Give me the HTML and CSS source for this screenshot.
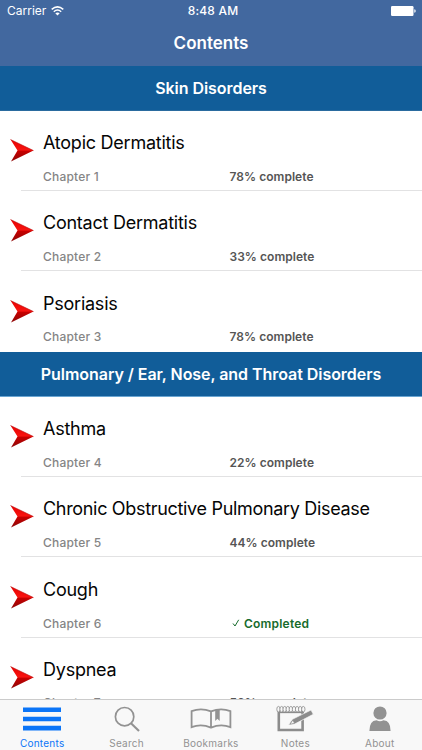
FILE: index.html
```html
<!DOCTYPE html>
<html lang="en">
<head>
<meta charset="utf-8">
<title>Contents</title>
<link rel="stylesheet" href="styles.css">
</head>
<body>
<svg width="0" height="0" class="defs">
  <defs>
    <linearGradient id="red" x1="0" y1="0" x2="0" y2="1"><stop offset="0" stop-color="#e80000"/><stop offset=".48" stop-color="#f81410"/><stop offset=".53" stop-color="#c80000"/><stop offset="1" stop-color="#8c0808"/></linearGradient>
    <symbol id="arrow" viewBox="0 0 24 23"><path d="M.5 .5 23.5 11.6 1 22.5 7.5 11.6Z" fill="url(#red)"/><path d="M.5 .5 23.5 11.6" stroke="#b51212" stroke-width=".6"/></symbol>
  </defs>
</svg>
<div class="screen">
  <header class="top">
    <div class="status">
      <div class="carrier"><span>Carrier</span>
        <svg width="13" height="10" viewBox="0 0 13 10" fill="none" stroke="#fff" stroke-width="1.5"><path d="M.7 3.4Q6.5-1.7 12.3 3.4M2.8 5.7Q6.5 2.4 10.2 5.7"/><path d="M4.3 7.3Q6.5 5.5 8.7 7.3L6.5 9.6Z" fill="#fff" stroke="none"/></svg>
      </div>
      <div class="clock">8:48 AM</div>
      <svg class="battery" width="25" height="10" viewBox="0 0 25 10" fill="#fff"><rect width="22.5" height="10" rx="1.2"/><path d="M23.3 3.3Q24.7 3.5 24.7 5T23.3 6.7Z"/></svg>
    </div>
    <h1>Contents</h1>
  </header>
  <main class="list">
    <h2>Skin Disorders</h2>
    <div class="row"><svg class="arrow"><use href="#arrow"/></svg><div class="cell"><div class="title">Atopic Dermatitis</div><div class="meta"><span>Chapter 1</span><b>78% complete</b></div></div></div>
    <div class="row"><svg class="arrow"><use href="#arrow"/></svg><div class="cell"><div class="title">Contact Dermatitis</div><div class="meta"><span>Chapter 2</span><b>33% complete</b></div></div></div>
    <div class="row last"><svg class="arrow"><use href="#arrow"/></svg><div class="cell"><div class="title">Psoriasis</div><div class="meta"><span>Chapter 3</span><b>78% complete</b></div></div></div>
    <h2 class="second">Pulmonary / Ear, Nose, and Throat Disorders</h2>
    <div class="row"><svg class="arrow"><use href="#arrow"/></svg><div class="cell"><div class="title">Asthma</div><div class="meta"><span>Chapter 4</span><b>22% complete</b></div></div></div>
    <div class="row"><svg class="arrow"><use href="#arrow"/></svg><div class="cell"><div class="title long">Chronic Obstructive Pulmonary Disease</div><div class="meta"><span>Chapter 5</span><b>44% complete</b></div></div></div>
    <div class="row"><svg class="arrow"><use href="#arrow"/></svg><div class="cell"><div class="title">Cough</div><div class="meta"><span>Chapter 6</span><b class="done"><svg width="8" height="8" viewBox="0 0 8 8" fill="none" stroke="#176b2c"><path d="M1 4.5 3 7 6.7.8"/></svg>Completed</b></div></div></div>
    <div class="row partial"><svg class="arrow"><use href="#arrow"/></svg><div class="cell"><div class="title">Dyspnea</div><div class="meta"><span>Chapter 7</span><b>56% complete</b></div></div></div>
  </main>
  <nav class="tabs">
    <div class="tab active"><svg width="38" height="28" viewBox="0 0 38 28"><path d="M0 3.5h38v4.6H0zM0 12.7h38v4.6H0zM0 21.8h38v4.6H0z" fill="#0b75f7"/></svg><span>Contents</span></div>
    <div class="tab"><svg width="28" height="28" viewBox="0 0 28 28" fill="none" stroke="#929292"><circle cx="11.6" cy="12.7" r="9.2" stroke-width="1.7"/><path d="M18 19.2 26 27" stroke-width="2.1"/></svg><span>Search</span></div>
    <div class="tab"><svg width="42" height="28" viewBox="0 0 42 28" fill="none" stroke="#929292" stroke-width="1.8"><path d="M21 7.4Q11 3.4 1.6 7.2V23.2Q11 19.4 21 23.6Q31 19.4 40.4 23.2V7.2Q31 3.4 21 7.4ZM21 7.4V23.6"/><path d="M25.2 6 29.7 5.1V17L27.4 14.8 25.2 17Z" fill="#929292" stroke="none"/></svg><span>Bookmarks</span></div>
    <div class="tab"><svg width="38" height="28" viewBox="0 0 38 28" fill="none" stroke="#8c8c8c"><path d="M2.8 6V26H26.6V7" stroke-width="2.6"/><path d="M2 8.4H27.6" stroke-width="1.5"/><g stroke-width=".8" fill="#f8f8f8"><ellipse cx="2.5" cy="5.2" rx="1.7" ry="2.8"/><ellipse cx="5.6" cy="5.2" rx="1.7" ry="2.8"/><ellipse cx="8.7" cy="5.2" rx="1.7" ry="2.8"/><ellipse cx="11.8" cy="5.2" rx="1.7" ry="2.8"/><ellipse cx="14.9" cy="5.2" rx="1.7" ry="2.8"/><ellipse cx="18" cy="5.2" rx="1.7" ry="2.8"/><ellipse cx="21.1" cy="5.2" rx="1.7" ry="2.8"/><ellipse cx="24.2" cy="5.2" rx="1.7" ry="2.8"/><ellipse cx="27.3" cy="5.2" rx="1.7" ry="2.8"/></g><path d="M12.5 21.1 16.3 15.3 35 6 37.3 10.3 18.7 20Z" fill="#8c8c8c" stroke="#f8f8f8" stroke-width=".7"/><path d="M14 20.2 16.8 16.2 18.5 19.2Z" fill="#f8f8f8" stroke="#8c8c8c" stroke-width=".6"/></svg><span>Notes</span></div>
    <div class="tab"><svg width="22" height="28" viewBox="0 0 22 28" fill="#929292"><circle cx="11" cy="9" r="6.6"/><path d="M.4 27Q.4 16.7 7.5 16.3Q11 18 14.5 16.3Q21.6 16.7 21.6 27Z"/></svg><span>About</span></div>
  </nav>
</div>
</body>
</html>
```
FILE: styles.css
```css
* { box-sizing: border-box; }
body { margin: 0; background: #fff; font-family: Inter, "Liberation Sans", sans-serif; }
.defs { position: absolute; }
.screen { width: 422px; height: 750px; display: flex; flex-direction: column; overflow: hidden; }
.top { height: 66px; flex: none; background: #42689f; color: #fff; }
.status { height: 22px; display: grid; grid-template-columns: 1fr auto 1fr; align-items: center; padding: 0 6px 0 7px; font-size: 12px; line-height: 22px; }
.carrier { display: flex; align-items: center; gap: 5px; letter-spacing: 0; }
.clock { font-weight: 500; letter-spacing: .2px; padding-left: 3px; }
.battery { justify-self: end; }
h1, h2 { margin: 0; text-align: center; color: #fff; font-weight: 600; }
h1 { font-size: 17px; line-height: 43px; letter-spacing: 0; }
.list { flex: 1; min-height: 0; overflow: hidden; }
h2 { height: 44.5px; line-height: 44px; font-size: 16px; letter-spacing: -.05px; background: #115d99; border-bottom: 1px solid #2a6b9f; }
.second { height: 45px; line-height: 45px; border-bottom-color: #69a5d2; }
.row { height: 80.4px; display: flex; }
.arrow { width: 24px; height: 23px; margin: 28.3px 9px 0 10px; flex: none; }
.cell { flex: 1; padding-top: 19.4px; }
.title { font-size: 18px; line-height: 25px; letter-spacing: -.24px; color: #050505; white-space: nowrap; }
.long { letter-spacing: -.32px; }
.meta { display: grid; grid-template-columns: 186.5px 1fr; margin-top: 12.7px; font-size: 12px; line-height: 17px; font-weight: 500; color: #858585; letter-spacing: .2px; }
.partial .meta { margin-top: 11.5px; }
.meta b { color: #555; font-weight: 600; letter-spacing: .04px; }
.meta .done { color: #176b2c; display: flex; align-items: center; gap: 4.5px; padding-left: 2px; letter-spacing: .2px; }
.row:not(.last) { background: linear-gradient(#e2e2e3, #e2e2e3) 21px 100% / 401px 1px no-repeat; }
.tabs { height: 51px; flex: none; border-top: 1px solid #cbcbcb; background: #f8f8f8; display: grid; grid-template-columns: repeat(5, 1fr); }
.tab { display: flex; flex-direction: column; align-items: center; padding-top: 4px; color: #929292; font-size: 10px; line-height: 14px; letter-spacing: .25px; }
.tab svg { height: 28px; }
.tab span { margin-top: 4px; }
.active { color: #0b75f7; }
```
